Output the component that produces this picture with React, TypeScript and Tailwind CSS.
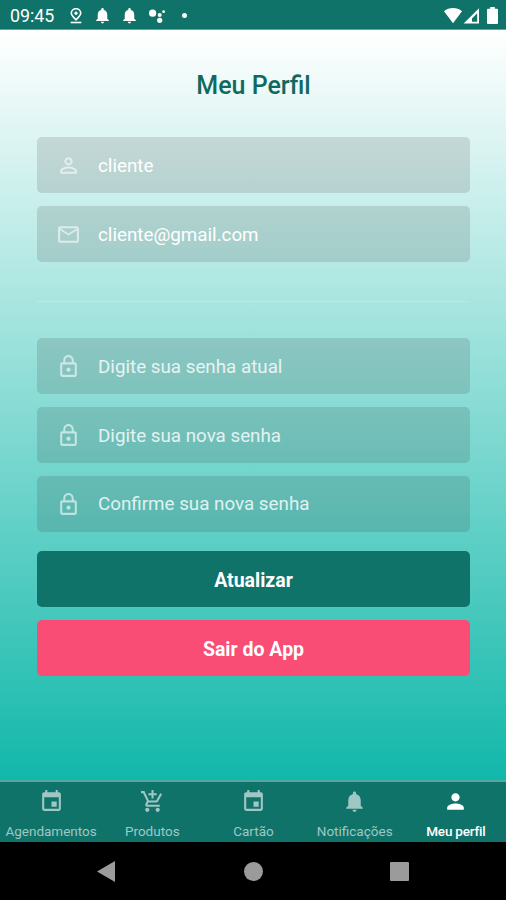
import type { IconType } from 'react-icons';
import {
  MdPersonOutline,
  MdMailOutline,
  MdLockOutline,
  MdEvent,
  MdAddShoppingCart,
  MdNotifications,
  MdPerson,
} from 'react-icons/md';
import clsx from 'clsx';

interface FieldProps {
  icon: IconType;
  placeholder: string;
  value?: string;
}

interface Tab {
  label: string;
  icon: IconType;
  active?: boolean;
}

const tabs: Tab[] = [
  { label: 'Agendamentos', icon: MdEvent },
  { label: 'Produtos', icon: MdAddShoppingCart },
  { label: 'Cartão', icon: MdEvent },
  { label: 'Notificações', icon: MdNotifications },
  { label: 'Meu perfil', icon: MdPerson, active: true },
];

function StatusBar() {
  return (
    <header className="flex h-[30px] shrink-0 items-center justify-between border-b border-[#6f9f9b] bg-[#10736a] pt-[2px] text-white">
      <div className="flex items-center">
        <span className="ml-[10px] w-[58px] pt-px text-[17.8px] leading-none">09:45</span>
        <svg className="h-4 w-4" viewBox="0 0 16 16" fill="none" stroke="currentColor" strokeWidth="1.6">
          <path d="M8 11.8C5.2 9 3.3 7.2 3.3 5.2a4.7 4.5 0 0 1 9.4 0c0 2-1.9 3.8-4.7 6.6Z" />
          <circle cx="8" cy="5.2" r="1.3" fill="currentColor" strokeWidth="0.8" />
          <path d="M2.7 14.5h10.6" />
        </svg>
        <MdNotifications className="ml-[9px] h-[19px] w-[19px]" />
        <MdNotifications className="ml-2 h-[19px] w-[19px]" />
        <svg className="ml-[9px] h-4 w-[18px]" viewBox="0 0 18 16" fill="currentColor">
          <circle cx="4.6" cy="5.2" r="3.6" />
          <circle cx="11.7" cy="7" r="2" />
          <circle cx="11.7" cy="12.3" r="2.6" />
          <circle cx="15.6" cy="3.7" r="1.4" />
        </svg>
        <span className="ml-[16px] h-[5px] w-[5px] rounded-full bg-white" />
      </div>
      <div className="flex items-center">
        <svg className="h-4 w-[18px]" viewBox="0 0 18 16" fill="currentColor">
          <path d="M0 3.3C5-1 13-1 18 3.3L9 15.2Z" />
        </svg>
        <svg className="ml-[1px] h-4 w-[17px]" viewBox="0 0 17 16" fill="currentColor" fillRule="evenodd">
          <path d="M.6 15.6H16V.2ZM9 13.7H14.2V5.2L9 10.4Z" />
        </svg>
        <svg className="mr-[8px] ml-[7px] h-[17px] w-[11px]" viewBox="0 0 11 17" fill="currentColor">
          <path d="M3.2 0h4.6v1.8H10a1 1 0 0 1 1 1V16a1 1 0 0 1-1 1H1a1 1 0 0 1-1-1V2.8a1 1 0 0 1 1-1h2.2Z" />
        </svg>
      </div>
    </header>
  );
}

function Field({ icon: Icon, placeholder, value }: FieldProps) {
  return (
    <label className="flex h-14 items-center rounded-[5px] bg-[#1c0808]/12 pl-[19px]">
      <Icon className="h-[25px] w-[25px] shrink-0 text-white/60" />
      <input
        className="ml-[17px] min-w-0 flex-1 bg-transparent pt-px text-[18.8px] text-white outline-none placeholder:text-white/80"
        placeholder={placeholder}
        defaultValue={value}
      />
    </label>
  );
}

function TabBar() {
  return (
    <nav className="grid h-[62px] shrink-0 grid-cols-5 border-t-2 border-[#55a69f] bg-[#10736a]">
      {tabs.map(({ label, icon: Icon, active }) => (
        <button
          key={label}
          className={clsx(
            'flex flex-col items-center pt-[7px] pl-px',
            active ? 'text-white' : 'text-[#9fc7c3]'
          )}
        >
          <Icon className="h-[25px] w-[25px]" />
          <span
            className={clsx(
              'mt-[7px] text-[13.5px] leading-[20px] whitespace-nowrap',
              active && 'font-medium tracking-[-0.2px]'
            )}
          >
            {label}
          </span>
        </button>
      ))}
    </nav>
  );
}

function SystemBar() {
  return (
    <footer className="flex h-[58px] shrink-0 items-center justify-between bg-black pr-[97px] pl-[97px] text-[#9b9b9b]">
      <svg className="h-[21px] w-[18px]" viewBox="0 0 18 21" fill="currentColor">
        <path d="M0 10.5 18 0v21Z" />
      </svg>
      <span className="ml-px h-[19px] w-[19px] rounded-full bg-current" />
      <span className="h-[19px] w-[19px] rounded-[1px] bg-current" />
    </footer>
  );
}

export default function App() {
  return (
    <div className="flex h-[900px] w-[506px] flex-col overflow-hidden font-[Roboto,sans-serif]">
      <StatusBar />
      <main className="flex flex-1 flex-col bg-linear-to-b/srgb from-white to-[#11b8aa] pr-[36px] pl-[37px]">
        <h1 className="mt-[39px] text-center text-[25px] leading-[34px] font-medium text-[#10695e]">
          Meu Perfil
        </h1>

        {/* Dados do cliente */}
        <div className="mt-[34.4px] flex flex-col gap-[12.8px]">
          <Field icon={MdPersonOutline} placeholder="Nome completo" value="cliente" />
          <Field icon={MdMailOutline} placeholder="E-mail" value="cliente@gmail.com" />
        </div>

        <hr className="mt-[38.4px] border-white/20" />

        {/* Troca de senha */}
        <div className="mt-[36.9px] flex flex-col gap-[12.8px]">
          <Field icon={MdLockOutline} placeholder="Digite sua senha atual" />
          <Field icon={MdLockOutline} placeholder="Digite sua nova senha" />
          <Field icon={MdLockOutline} placeholder="Confirme sua nova senha" />
        </div>

        <div className="mt-[18.6px] flex flex-col gap-[13px] text-[19.5px] font-bold text-white">
          <button className="h-14 rounded-[5px] bg-[#10736a] pt-[3px]">Atualizar</button>
          <button className="h-14 rounded-[5px] bg-[#f94d76] pt-[3px]">Sair do App</button>
        </div>
      </main>
      <TabBar />
      <SystemBar />
    </div>
  );
}
